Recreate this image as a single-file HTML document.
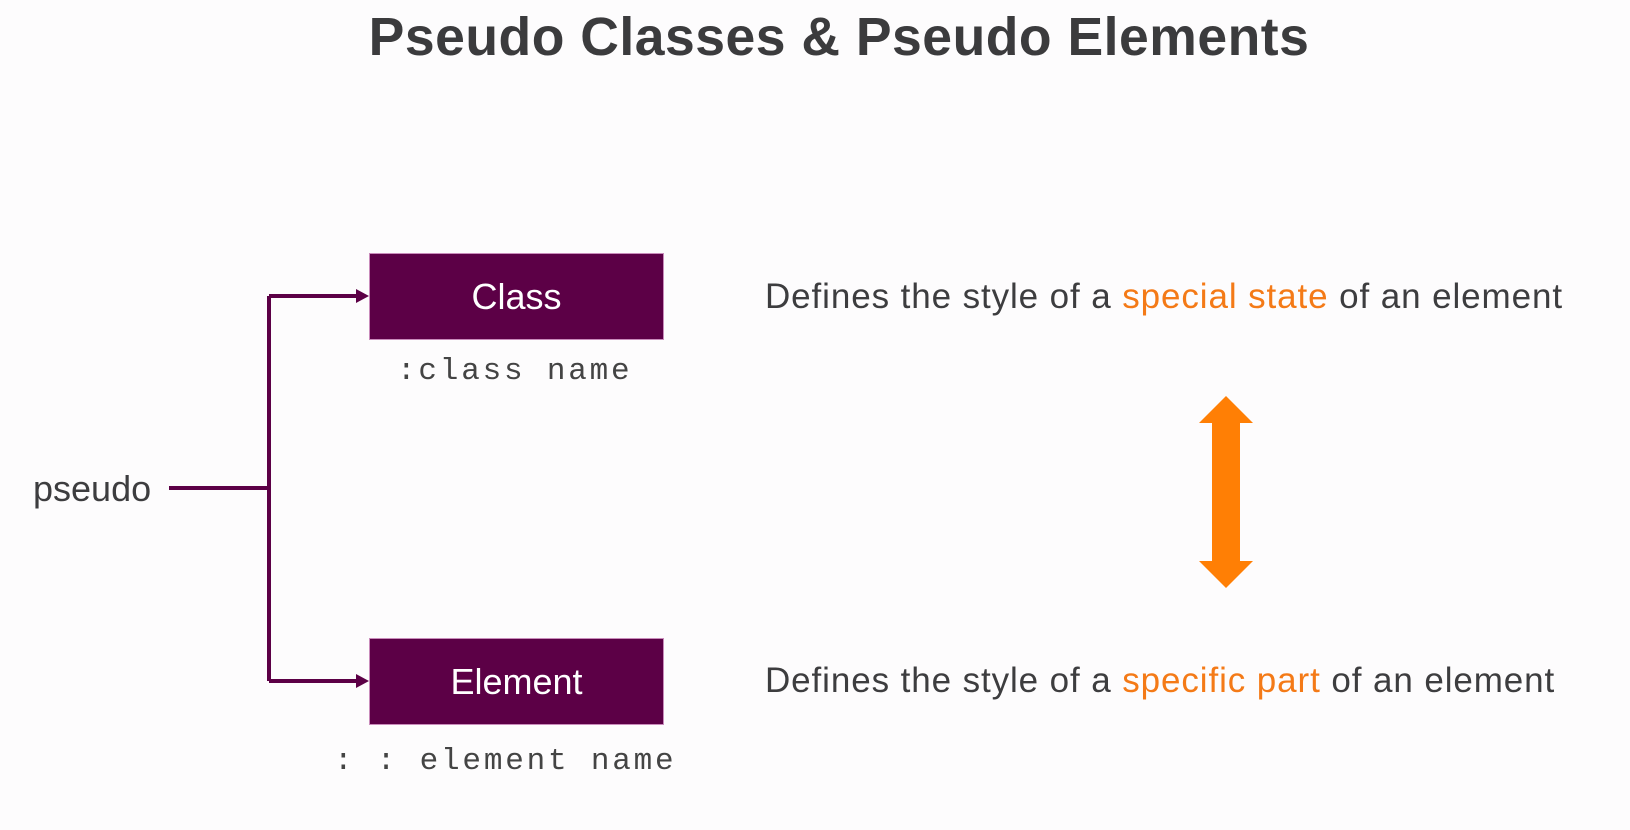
<!DOCTYPE html>
<html><head><meta charset="utf-8"><style>
html,body{margin:0;padding:0;background:#fdfcfd;}
body{width:1630px;height:830px;position:relative;overflow:hidden;font-family:"Liberation Sans",sans-serif;color:#3d3d3f;}
.t{position:absolute;white-space:nowrap;line-height:1;}
.box{position:absolute;left:369px;width:295px;height:87px;background:#5c0046;box-sizing:border-box;border:1.5px solid #c98bbb;color:#fff;font-size:36px;display:flex;align-items:center;justify-content:center;}
.mono{font-family:"Liberation Mono",monospace;font-size:31px;color:#444;letter-spacing:2.8px;}
.o{color:#f47a17;}
.d{font-size:35px;letter-spacing:0.9px;}
</style></head><body>
<div class="t" style="left:24px;width:1630px;text-align:center;top:11px;font-size:53.5px;font-weight:bold;color:#3b3b3d;letter-spacing:0.5px;">Pseudo Classes &amp; Pseudo Elements</div>

<svg width="1630" height="830" style="position:absolute;left:0;top:0">
<g fill="none" stroke="#5c0046" stroke-width="4">
<path d="M169 488 H269"/>
<path d="M269 296 V681"/>
<path d="M269 296 H360"/>
<path d="M269 681 H360"/>
</g>
<path d="M356 289 L369 296 L356 303Z" fill="#5c0046"/>
<path d="M356 674 L369 681 L356 688Z" fill="#5c0046"/>
<path d="M1226 396 L1253 423 L1240 423 L1240 561 L1253 561 L1226 588 L1199 561 L1212 561 L1212 423 L1199 423Z" fill="#ff7f05"/>
</svg>

<div class="box" style="top:253px;">Class</div>
<div class="box" style="top:638px;">Element</div>
<div class="t mono" style="left:397px;top:356px;">:class name</div>
<div class="t mono" style="left:334px;top:746px;">: : element name</div>
<div class="t" style="left:33px;top:471px;font-size:36px;">pseudo</div>

<div class="t d" style="left:765px;top:279px;">Defines the style of a <span class="o">special state</span> of an element</div>
<div class="t d" style="left:765px;top:663px;">Defines the style of a <span class="o">specific part</span> of an element</div>
</body></html>
